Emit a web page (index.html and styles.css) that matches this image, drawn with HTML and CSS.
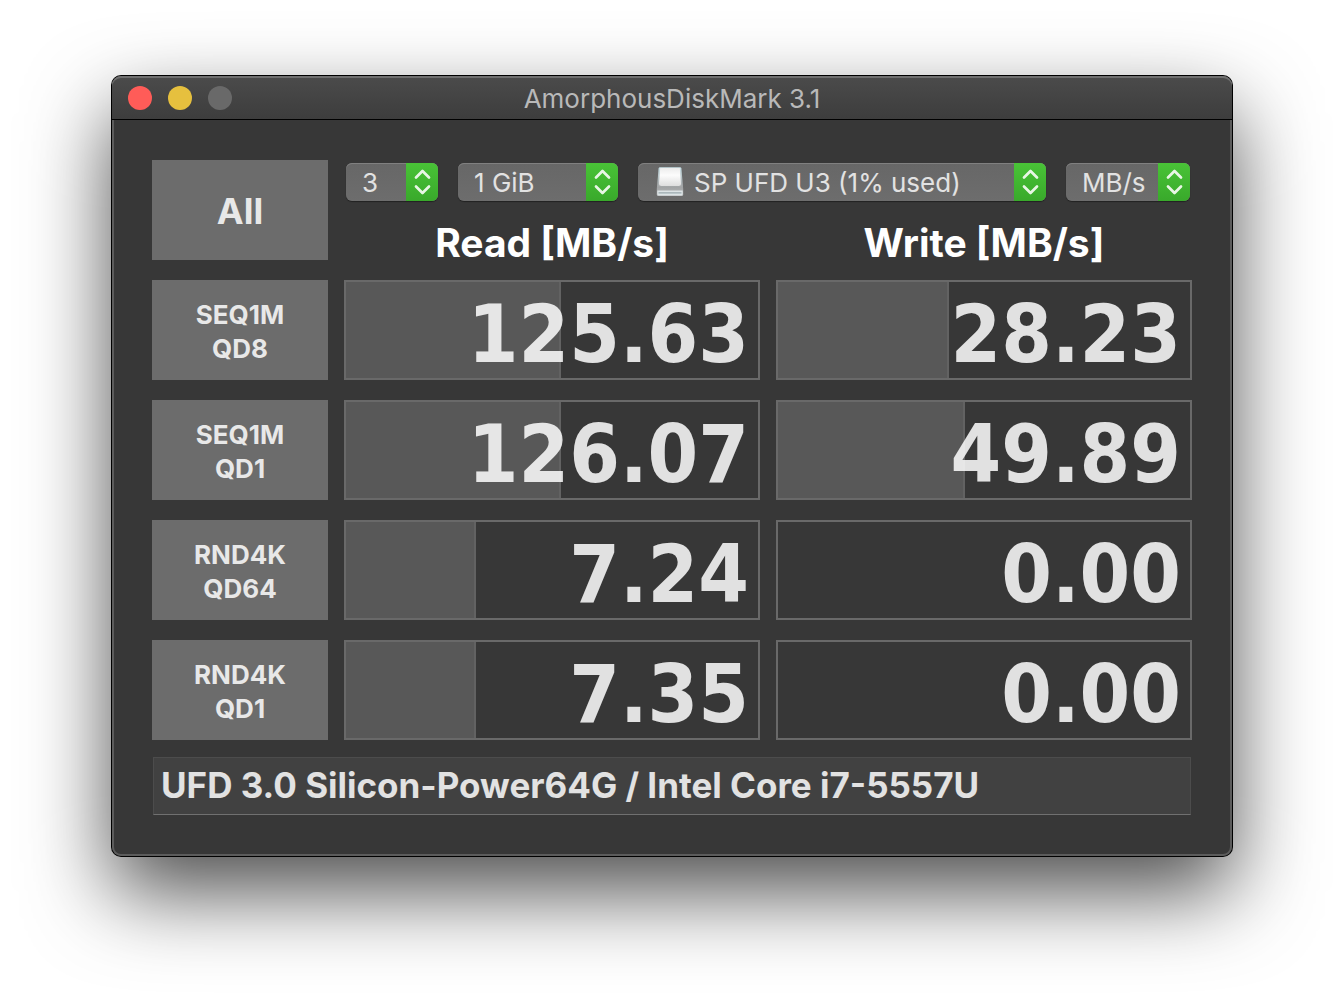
FILE: index.html
```html
<!DOCTYPE html>
<html lang="en">
<head>
<meta charset="utf-8">
<title>AmorphousDiskMark 3.1</title>
<link rel="stylesheet" href="styles.css">
</head>
<body>
<svg class="defs" width="0" height="0" aria-hidden="true">
  <symbol id="stepper" viewBox="0 0 32 38">
    <path d="M10 14.500L16.500 8L23 14.500M10 23.500L16.500 30L23 23.500" fill="none" stroke="#e8f6e5" stroke-width="2.700" stroke-linecap="round" stroke-linejoin="round"/>
  </symbol>
</svg>
<main class="window">
  <header class="titlebar">
    <div class="lights">
      <button class="light close" type="button" aria-label="Close"></button>
      <button class="light minimize" type="button" aria-label="Minimize"></button>
      <button class="light zoom" type="button" aria-label="Zoom" disabled></button>
    </div>
    <h1 class="title">AmorphousDiskMark 3.1</h1>
  </header>
  <div class="content">
    <table class="results">
      <thead>
        <tr>
          <td class="all-cell" rowspan="2"><button class="run all" type="button">All</button></td>
          <td class="controls-cell" colspan="2">
            <div class="controls">
              <div class="popup count">
                <select aria-label="Test count"><option>3</option></select>
                <svg class="stepper" aria-hidden="true"><use href="#stepper"/></svg>
              </div>
              <div class="popup size">
                <select aria-label="Test size"><option>1 GiB</option></select>
                <svg class="stepper" aria-hidden="true"><use href="#stepper"/></svg>
              </div>
              <div class="popup drive">
                <select aria-label="Drive"><option>SP UFD U3 (1% used)</option></select>
                <svg class="drive-icon" viewBox="0 0 28 32" aria-hidden="true">
                  <defs>
                    <linearGradient id="lid" x1="0" y1="0" x2="0" y2="1"><stop offset="0" stop-color="#ececec"/><stop offset=".4" stop-color="#fcfcfc"/><stop offset="1" stop-color="#dedede"/></linearGradient>
                    <linearGradient id="body" x1="0" y1="0" x2="0" y2="1"><stop offset="0" stop-color="#c9e0e6"/><stop offset=".7" stop-color="#a2a4a5"/><stop offset="1" stop-color="#b5b8b9"/></linearGradient>
                  </defs>
                  <path d="M4 1.200H24Q25.200 1.200 25.400 2.400L27.200 23V28.500Q27.200 30 25.700 30H2.300Q.8 30 .8 28.500V23L2.600 2.400Q2.800 1.200 4 1.200Z" fill="url(#body)"/>
                  <path d="M4.200 2H23.800L25 17.500Q25 20 22.500 20H5.500Q3 20 3 17.500Z" fill="url(#lid)"/>
                  <path d="M1.300 24.500H26.700V28Q26.700 29.500 25.200 29.500H2.800Q1.300 29.500 1.300 28Z" fill="#dde4e6"/>
                  <path d="M2.500 26.800H25.500" stroke="#9aa9ad" stroke-width="1.200"/>
                </svg>
                <svg class="stepper" aria-hidden="true"><use href="#stepper"/></svg>
              </div>
              <div class="popup unit">
                <select aria-label="Unit"><option>MB/s</option></select>
                <svg class="stepper" aria-hidden="true"><use href="#stepper"/></svg>
              </div>
            </div>
          </td>
        </tr>
        <tr>
          <th class="column-name" scope="col">Read [MB/s]</th>
          <th class="column-name" scope="col">Write [MB/s]</th>
        </tr>
      </thead>
      <tbody>
        <tr>
          <th scope="row"><button class="run" type="button">SEQ1M<br>QD8</button></th>
          <td class="score"><span class="bar" style="width:52.2%"></span><span class="value">125.63</span></td>
          <td class="score"><span class="bar" style="width:41.5%"></span><span class="value">28.23</span></td>
        </tr>
        <tr>
          <th scope="row"><button class="run" type="button">SEQ1M<br>QD1</button></th>
          <td class="score"><span class="bar" style="width:52.2%"></span><span class="value">126.07</span></td>
          <td class="score"><span class="bar" style="width:45.5%"></span><span class="value">49.89</span></td>
        </tr>
        <tr>
          <th scope="row"><button class="run" type="button">RND4K<br>QD64</button></th>
          <td class="score"><span class="bar" style="width:31.5%"></span><span class="value">7.24</span></td>
          <td class="score"><span class="value">0.00</span></td>
        </tr>
        <tr>
          <th scope="row"><button class="run" type="button">RND4K<br>QD1</button></th>
          <td class="score"><span class="bar" style="width:31.6%"></span><span class="value">7.35</span></td>
          <td class="score"><span class="value">0.00</span></td>
        </tr>
      </tbody>
    </table>
    <input class="note" type="text" aria-label="Note" value="UFD 3.0 Silicon-Power64G / Intel Core i7-5557U">
  </div>
</main>
</body>
</html>
```
FILE: styles.css
```css
* { box-sizing: border-box; }

body {
  margin: 0;
  padding: 76px 112px 148px;
  background: #fff;
  color: #e2e2e2;
  font-family: Inter, "Liberation Sans", sans-serif;
}

button, select, input { font: inherit; color: inherit; }

.defs { position: absolute; }

.window {
  border-radius: 9px;
  background: #373737;
  box-shadow:
    inset 0 0 0 2px #5c5c5c,
    0 0 0 1px #000,
    0 36px 84px rgba(0, 0, 0, 0.7);
}

.titlebar {
  display: grid;
  grid-template-columns: 1fr auto 1fr;
  align-items: center;
  height: 44px;
  padding: 0 16px;
  border-bottom: 1px solid #000;
  border-radius: 9px 9px 0 0;
  background: linear-gradient(#4b4b4b, #3d3d3d);
  box-shadow: inset 0 2px 0 #707070;
}

.lights { display: flex; gap: 16px; }

.light {
  width: 24px;
  height: 24px;
  padding: 0;
  border: 0;
  border-radius: 50%;
}

.close { background: #ff5c58; }
.minimize { background: #e6c03e; }
.zoom { background: #696969; }

.title {
  margin: 0;
  padding-top: 2px;
  color: #b9b9b9;
  font-size: 26px;
  font-weight: 400;
  line-height: 32px;
}

.content { padding: 40px 40px 41px; }

.results {
  display: grid;
  grid-template-columns: 176px 1fr 1fr;
  column-gap: 16px;
}

.results thead, .results tbody, .results tr { display: contents; }

.results th, .results td { padding: 0; }

.results tbody th, .results tbody td { height: 100px; margin-top: 20px; }

.all-cell { grid-row: span 2; height: 100px; }

.controls-cell { grid-column: span 2; }

.controls {
  display: flex;
  gap: 20px;
  padding: 3px 2px 0;
}

.popup {
  display: grid;
  grid-template-columns: 1fr 32px;
  height: 38px;
  overflow: hidden;
  border-radius: 6px;
  background: linear-gradient(#676767, #6d6d6d);
  box-shadow: 0 1px 1px rgba(0, 0, 0, 0.4), inset 0 1px 0 #808080;
}

.count { width: 92px; }
.size { width: 160px; }
.drive { flex: 1; }
.unit { width: 124px; }

.popup select {
  grid-area: 1 / 1 / 2 / 3;
  width: 100%;
  padding: 2px 32px 0 16px;
  border: 0;
  background: none;
  appearance: none;
  font-size: 26px;
  line-height: 36px;
}

.popup option { background: #373737; }

.popup.drive select { padding-left: 56px; }

.drive-icon {
  grid-area: 1 / 1;
  width: 28px;
  height: 32px;
  margin: 3px 18px;
  pointer-events: none;
}

.stepper {
  grid-area: 1 / 2;
  width: 32px;
  height: 38px;
  background: linear-gradient(#49c337, #39a92b);
  pointer-events: none;
}

.results .column-name {
  height: 59px;
  padding-top: 18px;
  color: #fff;
  font-size: 39px;
  font-weight: 700;
  line-height: 48px;
  text-align: center;
}

.run {
  display: block;
  width: 100%;
  height: 100%;
  padding: 4px 0 0;
  border: 0;
  background: #6c6c6c;
  color: #e8e8e8;
  font-size: 26px;
  font-weight: 700;
  line-height: 34px;
  text-align: center;
}

.all { padding-top: 2px; font-size: 36px; }

.score {
  display: grid;
  align-items: center;
  border: 2px solid #696969;
}

.bar {
  grid-area: 1 / 1;
  height: 100%;
  border-right: 2px solid #626262;
  background: #585858;
}

.value {
  grid-area: 1 / 1;
  padding: 8px 9px 0 0;
  color: rgba(255, 255, 255, 0.85);
  font-family: "DejaVu Sans Condensed", "DejaVu Sans", sans-serif;
  font-size: 81px;
  font-weight: 700;
  line-height: 88px;
  text-align: right;
}

.note {
  display: block;
  width: calc(100% - 2px);
  height: 58px;
  margin: 17px 1px 0;
  padding: 0 7px 2px;
  border: 1px solid #4c4c4c;
  border-bottom: 1px solid #707070;
  border-radius: 0;
  background: #414141;
  font-size: 35px;
  font-weight: 700;
}
```
